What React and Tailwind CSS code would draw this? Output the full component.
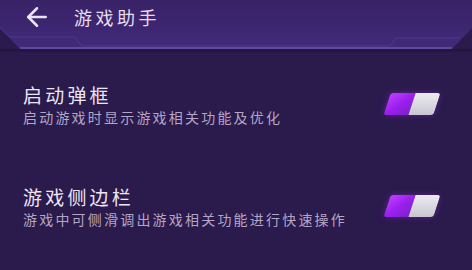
import { ArrowLeft } from 'lucide-react';

const font = { fontFamily: '"Noto Sans CJK SC", "Noto Sans", sans-serif' };

function Toggle() {
  return (
    <div className="flex h-[22px] w-[50px] -skew-x-[18deg] overflow-hidden rounded-[3px] shadow-[0_0_6px_rgba(170,60,255,0.35)]">
      <div className="w-1/2 bg-gradient-to-br from-[#c23cff] via-[#9d1ff0] to-[#7a22c8]" />
      <div className="w-1/2 bg-gradient-to-b from-[#ececf0] to-[#c9c6d0]" />
    </div>
  );
}

function Row({ title, desc }) {
  return (
    <div className="flex items-center justify-between pl-[23px] pr-[35px]">
      <div className="flex flex-col">
        <span className="text-[19px] leading-[22px] tracking-[3.2px] text-[#ece6f4]">{title}</span>
        <span className="mt-[2px] text-[14px] leading-[18px] tracking-[2.2px] text-[#b3a6c6]">{desc}</span>
      </div>
      <div className="-mt-[3px]">
        <Toggle />
      </div>
    </div>
  );
}

export default function App() {
  return (
    <div className="h-[270px] w-[472px] overflow-hidden bg-[#2b1a4c]" style={font}>
      {/* Header */}
      <div className="relative h-[52px]">
        <svg className="absolute inset-0" width="472" height="52" viewBox="0 0 472 52">
          <defs>
            <linearGradient id="hg" x1="0" y1="0" x2="0" y2="1">
              <stop offset="0" stopColor="#392266" />
              <stop offset="1" stopColor="#412a7a" />
            </linearGradient>
          </defs>
          <rect x="0" y="49" width="472" height="3" fill="#24163f" />
          <polygon points="0,0 472,0 472,28 452,49 20,49 0,28" fill="url(#hg)" />
          <polyline points="0,28 10,37 74,37 82,46 390,46 396,38 460,38" fill="none" stroke="#5a44a0" strokeWidth="1" opacity="0.6" />
          <line x1="20" y1="48" x2="452" y2="48" stroke="#7a62c0" strokeWidth="1.5" opacity="0.75" />
        </svg>
        <div className="relative flex h-[34px] items-center pl-[22px]">
          <ArrowLeft size={30} strokeWidth={2} className="text-[#e8e4f2]" />
          <span className="ml-[22px] text-[18px] tracking-[3.5px] text-[#e6deef]">游戏助手</span>
        </div>
      </div>

      <div className="mt-[32px] flex flex-col gap-[60px]">
        <Row title="启动弹框" desc="启动游戏时显示游戏相关功能及优化" />
        <Row title="游戏侧边栏" desc="游戏中可侧滑调出游戏相关功能进行快速操作" />
      </div>
    </div>
  );
}
